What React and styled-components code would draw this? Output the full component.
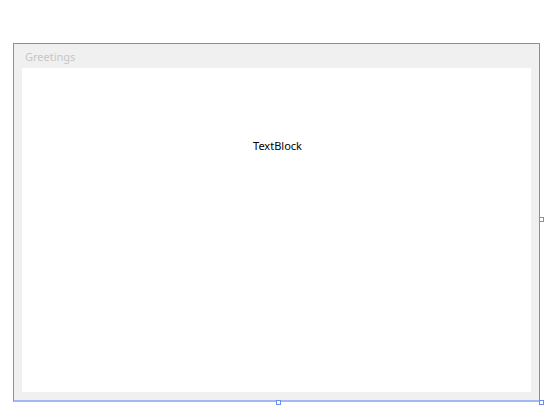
import React from "react";
import styled, { createGlobalStyle } from "styled-components";

const Global = createGlobalStyle`
  html, body { margin: 0; padding: 0; background: #ffffff; }
  body { font-family: "Noto Sans", "Open Sans", sans-serif; }
`;

const Canvas = styled.div`
  width: 552px;
  height: 414px;
  padding: 43px 0 0 13px;
  box-sizing: border-box;
`;

const Frame = styled.div`
  position: relative;
  width: 527px;
  height: 359px;
  box-sizing: border-box;
  border: 1px solid #6b8df0;
  border-bottom: 2px solid #a2b9f6;
  background: #f0f0f0;
  display: flex;
  flex-direction: column;
  padding: 0 8px 8px 8px;
`;

const Header = styled.div`
  height: 24px;
  display: flex;
  align-items: center;
  padding-left: 3px;
  font-size: 11px;
  color: #c6c6c6;
  flex: none;
`;

const Content = styled.div`
  flex: 1;
  background: #ffffff;
  display: flex;
  justify-content: center;
  align-items: flex-start;
  padding-top: 70px;
`;

const TextBlock = styled.span`
  font-size: 11px;
  color: #000000;
  padding-left: 2px;
`;

const Handle = styled.div`
  position: absolute;
  width: 5px;
  height: 5px;
  box-sizing: border-box;
  background: #ffffff;
  border: 1px solid #6b8df0;
  left: ${(p) => p.$left};
  top: ${(p) => p.$top};
`;

export default function App() {
  return (
    <>
      <Global />
      <Canvas>
        <Frame>
          <Header>Greetings</Header>
          <Content>
            <TextBlock>TextBlock</TextBlock>
          </Content>
          <Handle $left="525px" $top="173px" />
          <Handle $left="262px" $top="356px" />
          <Handle $left="525px" $top="356px" />
        </Frame>
      </Canvas>
    </>
  );
}
